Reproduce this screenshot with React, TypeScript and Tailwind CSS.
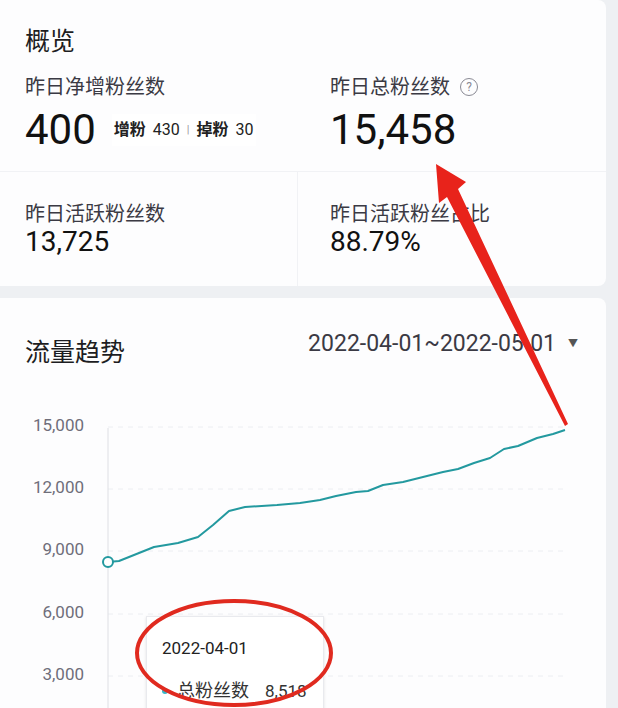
import React from 'react';

const font = { fontFamily: 'Roboto, "Noto Sans CJK SC", sans-serif' };

// rough pixel points of the 总粉丝数 line, page coords
const linePoints: [number, number][] = [
  [108, 562], [119, 561], [134, 555], [154, 547], [178, 543], [198, 537], [213, 525],
  [229, 511], [245, 507], [277, 505], [300, 503], [320, 500], [336, 496], [356, 492],
  [368, 491], [383, 485], [403, 482], [423, 477], [443, 472], [458, 469], [474, 463],
  [490, 458], [504, 449], [518, 446], [537, 438], [553, 434], [565, 430],
];

const CHART_TOP = 400;
const gridValues = [
  { label: '15,000', y: 427 },
  { label: '12,000', y: 489 },
  { label: '9,000', y: 551 },
  { label: '6,000', y: 614 },
  { label: '3,000', y: 676 },
];

function Stat({ label, value, help }: { label: string; value: string; help?: boolean }) {
  return (
    <div>
      <div className="flex items-center gap-[10px] text-[20px] leading-[28px] text-[#3b3a44]">
        {label}
        {help && (
          <span className="w-[18px] h-[18px] rounded-full border border-[#8a8a94] text-[#8a8a94] text-[12px] leading-[16px] flex items-center justify-center">
            ?
          </span>
        )}
      </div>
      <div className="mt-[5px] text-[42px] leading-[48px] text-[#111]">{value}</div>
    </div>
  );
}

function Chart() {
  const d = linePoints.map(([x, y], i) => `${i ? 'L' : 'M'}${x} ${y - CHART_TOP}`).join(' ');
  return (
    <div className="relative h-[308px]">
      <svg width="606" height="308" className="block">
        {gridValues.map((g) => (
          <g key={g.label}>
            <line x1="108" x2="567" y1={g.y - CHART_TOP} y2={g.y - CHART_TOP} stroke="#eceef2" strokeDasharray="5 5" />
            <text x="84" y={g.y - CHART_TOP} textAnchor="end" dominantBaseline="middle" fontSize="17" fill="#6f6e7a" style={font}>
              {g.label}
            </text>
          </g>
        ))}
        <line x1="108" x2="108" y1="28" y2="308" stroke="#dedfe4" />
        <path d={d} fill="none" stroke="#23999f" strokeWidth="2" strokeLinejoin="round" />
        <circle cx="108" cy={562 - CHART_TOP} r="5" fill="#fff" stroke="#23999f" strokeWidth="2" />
      </svg>
      <div className="absolute left-[146px] top-[216px] w-[178px] h-[110px] bg-white border border-[#e9eaee] shadow-sm px-[15px] pt-[19px]">
        <div className="text-[17px] leading-[24px] text-[#222]">2022-04-01</div>
        <div className="mt-[19px] flex items-center text-[17px] leading-[24px] text-[#333]">
          <span className="w-[6px] h-[6px] rounded-full bg-[#38b6c9] mr-[9px]" />
          <span className="text-[18px]">总粉丝数</span>
          <span className="ml-[16px]">8,518</span>
        </div>
      </div>
    </div>
  );
}

export default function App() {
  return (
    <div className="relative w-[618px] h-[708px] overflow-hidden bg-[#eef0f3] pr-[12px]" style={font}>
      {/* 概览 */}
      <div className="h-[286px] bg-[#fdfdfe] rounded-r-lg">
        <div className="h-[172px] border-b border-[#f1f2f5] pt-[26px] pl-[25px]">
          <div className="text-[25px] leading-[32px] text-[#1d1d22]">概览</div>
          <div className="mt-[15px] grid grid-cols-[305px_1fr]">
            <div>
              <div className="text-[20px] leading-[28px] text-[#3b3a44]">昨日净增粉丝数</div>
              <div className="mt-[5px] flex items-center">
                <span className="text-[42px] leading-[48px] text-[#111]">400</span>
                <span className="ml-[16px] flex items-center gap-[7px] text-[16px] text-[#222] bg-white px-[2px] py-[4px]">
                  <b className="font-bold">增粉</b>
                  <span>430</span>
                  <span className="text-[#999] text-[11px]">|</span>
                  <b className="font-bold">掉粉</b>
                  <span>30</span>
                </span>
              </div>
            </div>
            <Stat label="昨日总粉丝数" value="15,458" help />
          </div>
        </div>
        <div className="grid grid-cols-[298px_1fr] h-[114px]">
          <div className="border-r border-[#f1f2f5] pl-[25px] pt-[29px]">
            <div className="text-[20px] leading-[26px] text-[#3b3a44]">昨日活跃粉丝数</div>
            <div className="text-[28px] leading-[30px] text-[#111]">13,725</div>
          </div>
          <div className="pl-[32px] pt-[29px]">
            <div className="text-[20px] leading-[26px] text-[#3b3a44]">昨日活跃粉丝占比</div>
            <div className="text-[28px] leading-[30px] text-[#111]">88.79%</div>
          </div>
        </div>
      </div>

      {/* 流量趋势 */}
      <div className="mt-[12px] bg-[#fdfdfe] rounded-tr-lg">
        <div className="h-[102px] pt-[31px] pl-[25px] pr-[28px] flex justify-between items-start">
          <div className="mt-[8px] text-[25px] leading-[32px] text-[#1d1d22]">流量趋势</div>
          <div className="flex items-center gap-[12px] text-[23px] leading-[30px] text-[#3b3a44]">
            2022-04-01~2022-05-01
            <span className="text-[10px] text-[#555]">▼</span>
          </div>
        </div>
        <Chart />
      </div>

      {/* red annotations */}
      <svg className="absolute inset-0 pointer-events-none" width="618" height="708">
        <polygon points="436,164 466,182 458,189 568,424 565,426 447,197 439,203" fill="#e8231b" />
        <ellipse cx="234" cy="653" rx="97" ry="52" fill="none" stroke="#e02a1f" strokeWidth="4" />
      </svg>
    </div>
  );
}
